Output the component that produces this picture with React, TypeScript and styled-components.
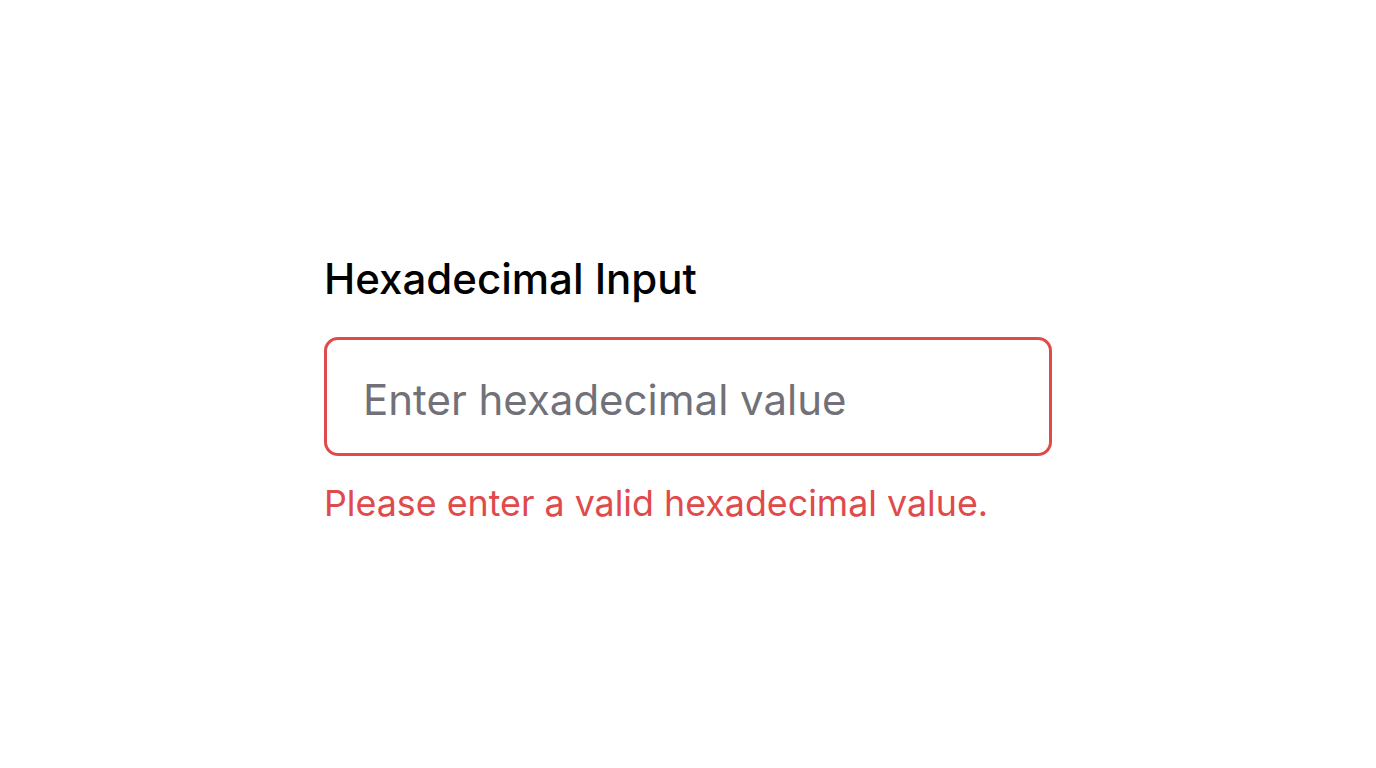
import styled, { createGlobalStyle } from "styled-components";

const GlobalStyle = createGlobalStyle`
    html, body {
        margin: 0;
        padding: 0;
        background: #ffffff;
        font-family: Inter, "Noto Sans", sans-serif;
    }
`;

const Page = styled.main`
    box-sizing: border-box;
    width: 100vw;
    height: 100vh;
    padding-top: 9px;
    display: flex;
    align-items: center;
    justify-content: center;
`;

const Field = styled.div`
    width: 728px;
    display: flex;
    flex-direction: column;
`;

const Label = styled.label`
    font-size: 42px;
    font-weight: 500;
    color: #000000;
    line-height: 63px;
    margin-bottom: 27px;
`;

const Input = styled.input<{ $invalid?: boolean }>`
    box-sizing: border-box;
    width: 100%;
    height: 119px;
    padding: 6px 37px 0 36px;
    border: 3px solid ${p => (p.$invalid ? "#e04a4b" : "#d1d5db")};
    border-radius: 14px;
    font-family: inherit;
    font-size: 42px;
    color: #111827;
    outline: none;

    &::placeholder {
        color: #71717a;
    }
`;

const ErrorText = styled.p`
    margin: 20px 0 0;
    font-size: 35.8px;
    line-height: 54px;
    color: #e04a4b;
`;

export default function App() {
    return (
        <>
            <GlobalStyle />
            <Page>
                <Field>
                    <Label htmlFor="hex">Hexadecimal Input</Label>
                    <Input id="hex" $invalid placeholder="Enter hexadecimal value" />
                    <ErrorText>Please enter a valid hexadecimal value.</ErrorText>
                </Field>
            </Page>
        </>
    );
}
